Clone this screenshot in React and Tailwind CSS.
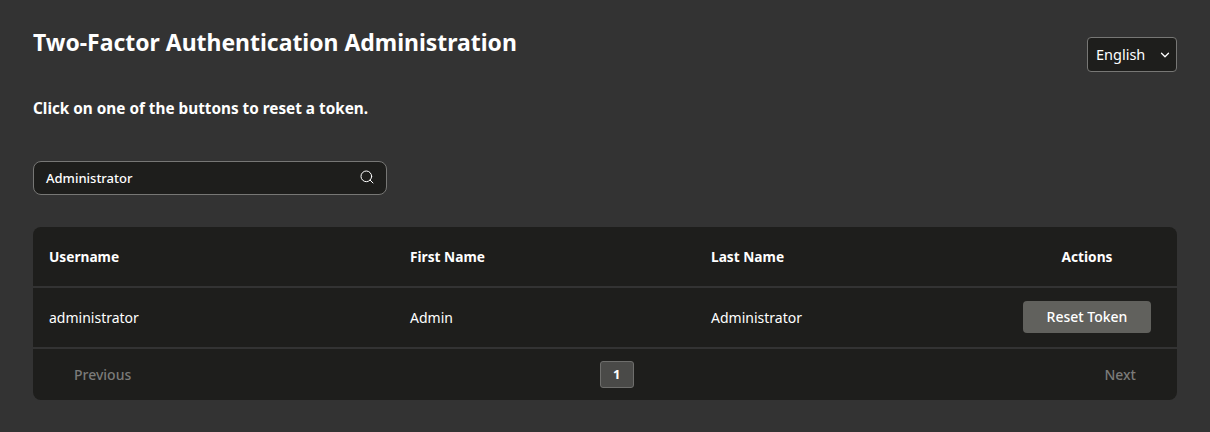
import { ChevronDown, Search } from 'lucide-react';

const font = "font-['Noto_Sans','Open_Sans',sans-serif]";
const gridCols = 'grid grid-cols-[361px_301px_302px_180px] items-center';

export default function App() {
  return (
    <div className={`${font} h-[432px] w-full overflow-hidden bg-[#333333] px-[33px] pt-[27px] text-white`}>
      <div className="flex items-start justify-between">
        <h1 className="text-[22.95px] font-bold leading-[30px]">Two-Factor Authentication Administration</h1>
        <div className="mt-[10px] flex h-[35px] w-[90px] items-center justify-between rounded-[4px] border border-[#777775] bg-[#1e1e1c] pl-2 pr-[4px] text-[14.5px]">
          <span>English</span>
          <ChevronDown size={14} strokeWidth={2.25} />
        </div>
      </div>

      <p className="mt-[24px] text-[15.3px] font-bold leading-[24px]">Click on one of the buttons to reset a token.</p>

      <div className="mt-[41px] flex h-[34px] w-[354px] items-center justify-between rounded-[8px] border border-[#777775] bg-[#1e1e1c] pl-3 pr-[11px]">
        <span className="mt-[1px] text-[13px] font-medium">Administrator</span>
        <Search size={16} strokeWidth={1.5} className="mb-[3px]" />
      </div>

      <div className="mt-[32px] h-[173px] w-[1144px] overflow-hidden rounded-[8px] bg-[#1e1e1c] text-[14px]">
        <div className={`${gridCols} h-[61px] border-b-2 border-[#333333] pt-[2px] text-[13.7px] font-bold`}>
          <div className="pl-4">Username</div>
          <div className="pl-4">First Name</div>
          <div className="pl-4">Last Name</div>
          <div className="text-center">Actions</div>
        </div>
        <div className={`${gridCols} h-[61px] border-b-2 border-[#333333]`}>
          <div className="pl-4">administrator</div>
          <div className="pl-4">Admin</div>
          <div className="pl-4">Administrator</div>
          <div className="flex justify-center">
            <button className="mb-[2px] h-8 w-[128px] rounded-[4px] bg-[#61615d] text-[14px] font-medium">Reset Token</button>
          </div>
        </div>
        <div className="flex h-[51px] items-center justify-between px-[41px] font-medium text-[#7b7b79]">
          <span>Previous</span>
          <button className="mr-[2px] h-[27px] w-[34px] rounded-[3px] border border-[#6e6e6c] bg-[#4a4a48] text-[13px] font-bold text-white">1</button>
          <span>Next</span>
        </div>
      </div>
    </div>
  );
}
